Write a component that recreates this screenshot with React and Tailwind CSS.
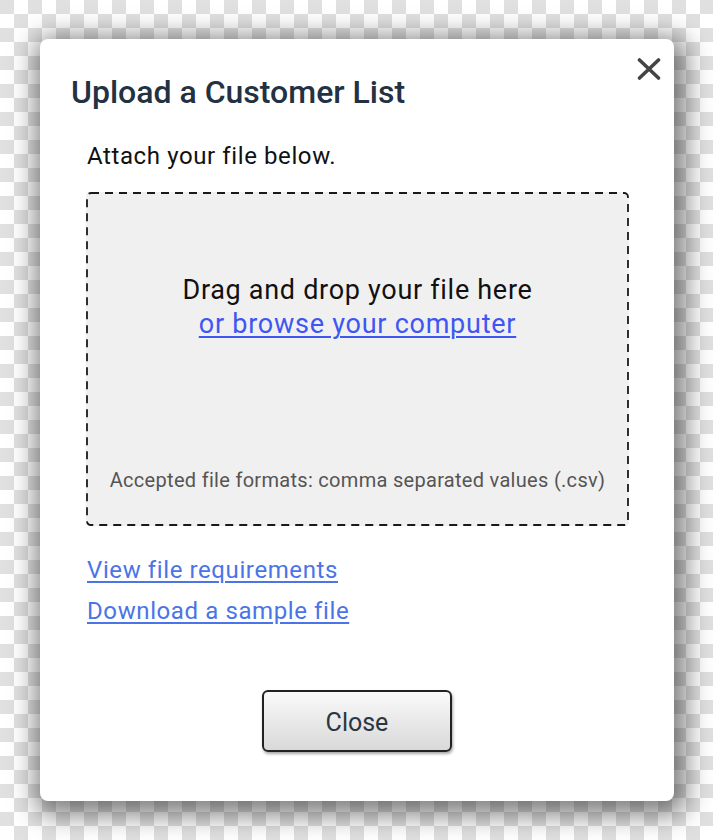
import React from "react";

export default function App() {
  return (
    <div
      className="w-[713px] h-[840px] overflow-hidden pt-[39px] pl-[40px] bg-[repeating-conic-gradient(#ffffff_0_25%,#e0e0e0_0_50%)] bg-[length:28px_28px]"
      style={{ fontFamily: "Roboto, 'Liberation Sans', sans-serif" }}
    >
      <div className="relative w-[634px] h-[762px] bg-white rounded-[8px] shadow-[4px_6px_26px_8px_rgba(0,0,0,0.5)] flex flex-col">
        <button className="absolute right-[13px] top-[19px] w-[24px] h-[22px] text-[#444]">
          <svg viewBox="0 0 24 22" className="w-[24px] h-[22px]">
            <path d="M2.5 2L21.5 20M21.5 2L2.5 20" stroke="currentColor" strokeWidth="3.6" strokeLinecap="round" />
          </svg>
        </button>

        <h1 className="pl-[31px] pt-[35px] text-[32px] leading-[36px] font-medium text-[#233142]">
          Upload a Customer List
        </h1>

        <div className="pl-[46px] mt-[32px]">
          <p className="ml-[1px] text-[24px] leading-[28px] tracking-[0.6px] text-[#111]">Attach your file below.</p>

          <div className="relative mt-[22px] w-[543px] h-[334px] bg-[#f0f0f0] rounded-[4px] flex flex-col items-center">
            <svg className="absolute inset-0 pointer-events-none" width="543" height="334">
              <rect x="1" y="1" width="541" height="332" rx="4" fill="none" stroke="#1a1a1a" strokeWidth="1.8" strokeDasharray="8 6" />
            </svg>
            <p className="mt-[81px] text-[27px] leading-[34px] tracking-[0.7px] text-[#111]">Drag and drop your file here</p>
            <a href="#" className="text-[27px] leading-[34px] tracking-[0.75px] text-[#3f56f3] underline underline-offset-[3px] decoration-[1.5px]">
              or browse your computer
            </a>
            <p className="mt-auto mb-[33px] text-[20px] leading-[26px] tracking-[0.3px] text-[#555]">
              Accepted file formats: comma separated values (.csv)
            </p>
          </div>

          <div className="mt-[30px] flex flex-col gap-[12px] items-start">
            <a href="#" className="ml-[1px] text-[24px] leading-[29px] tracking-[0.6px] text-[#4a74e8] underline underline-offset-[3px] decoration-[1.5px]">
              View file requirements
            </a>
            <a href="#" className="ml-[1px] text-[24px] leading-[29px] tracking-[0.6px] text-[#4a74e8] underline underline-offset-[3px] decoration-[1.5px]">
              Download a sample file
            </a>
          </div>
        </div>

        <div className="mt-[64px] flex justify-center">
          <button className="w-[190px] h-[62px] pt-[3px] rounded-[6px] border-2 border-[#222] bg-linear-to-b from-[#fafafa] to-[#d9d9d9] shadow-[1px_2px_3px_rgba(0,0,0,0.35)] text-[25px] text-[#2b3645]">
            Close
          </button>
        </div>
      </div>
    </div>
  );
}
